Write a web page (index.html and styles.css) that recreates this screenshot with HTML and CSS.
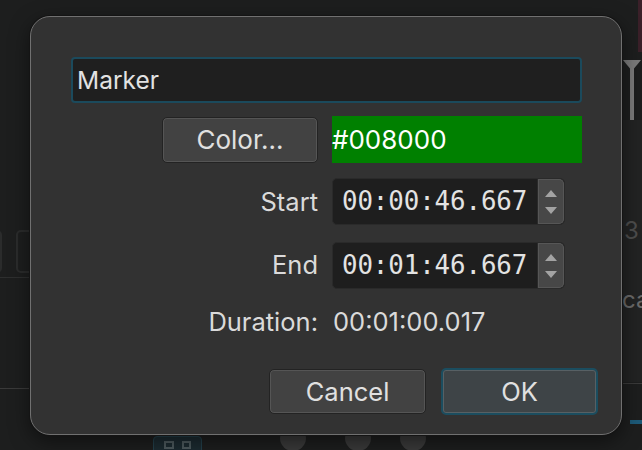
FILE: index.html
```html
<!DOCTYPE html>
<html>
<head>
<meta charset="utf-8">
<link rel="stylesheet" href="styles.css">
</head>
<body>
<div class="backdrop">
  <div class="thumb"></div>
  <div class="playhead"><span class="tri"></span><span class="stem"></span></div>
  <div class="right-panel"><span class="dim-3">3</span><span class="dim-ca">ca</span></div>
  <div class="left-ctl a"></div>
  <div class="left-ctl b"></div>
  <div class="hline l1"></div>
  <div class="hline l2"></div>
  <div class="hline r1"></div>
  <div class="blue-bar"></div>
  <div class="mini-btn"><span></span><span></span></div>
  <div class="knob k1"></div>
  <div class="knob k2"></div>
  <div class="knob k3"></div>
</div>

<div class="dialog">
  <div class="name-field">Marker</div>
  <div class="form">
    <button class="btn color-btn">Color...</button>
    <div class="swatch">#008000</div>

    <div class="label">Start</div>
    <div class="spin">
      <div class="spin-text">00:00:46.667</div>
      <div class="spin-arrows">
        <svg width="16" height="32" viewBox="0 0 16 32"><path d="M2 11 L8 4 L14 11 Z" fill="#a3a3a3"/><path d="M2 21 L14 21 L8 28 Z" fill="#a3a3a3"/></svg>
      </div>
    </div>

    <div class="label">End</div>
    <div class="spin end">
      <div class="spin-text">00:01:46.667</div>
      <div class="spin-arrows">
        <svg width="16" height="32" viewBox="0 0 16 32"><path d="M2 11 L8 4 L14 11 Z" fill="#a3a3a3"/><path d="M2 21 L14 21 L8 28 Z" fill="#a3a3a3"/></svg>
      </div>
    </div>

    <div class="label dur">Duration:</div>
    <div class="dur-value">00:01:00.017</div>
  </div>
  <div class="actions">
    <button class="btn action">Cancel</button>
    <button class="btn action default">OK</button>
  </div>
</div>
</body>
</html>
```

FILE: styles.css
```css
* { box-sizing: border-box; }
html, body { margin: 0; padding: 0; }
body {
  width: 642px;
  height: 450px;
  overflow: hidden;
  background: #1d1e1e;
  font-family: "Inter", "Liberation Sans", sans-serif;
  color: #dedede;
  position: relative;
}

/* backdrop application bits */
.backdrop { position: absolute; inset: 0; }
.thumb { position: absolute; left: 638px; top: 0; width: 4px; height: 52px; background: #3b2029; }
.playhead { position: absolute; left: 623px; top: 60px; width: 22px; height: 60px; }
.playhead .tri { position: absolute; left: 0; top: 0; width: 0; height: 0;
  border-left: 9px solid transparent; border-right: 9px solid transparent; border-top: 11px solid #7b7b7b; }
.playhead .stem { position: absolute; left: 7px; top: 0; width: 4px; height: 60px; background: #7b7b7b; }
.right-panel { position: absolute; left: 622px; top: 120px; width: 20px; height: 262px; background: #222323; overflow: hidden; }
.dim-3 { position: absolute; left: 2px; top: 96px; font-size: 24px; color: #4d4d4d; }
.dim-ca { position: absolute; left: 0; top: 165px; font-size: 24px; color: #6a6a6a; white-space: nowrap; }
.left-ctl { position: absolute; top: 230px; height: 43px; border: 2px solid #2b2c2c; border-radius: 5px; }
.left-ctl.a { left: -20px; width: 22px; }
.left-ctl.b { left: 16px; width: 30px; }
.hline { position: absolute; height: 1px; background: #2e2f2f; }
.hline.l1 { left: 0; top: 277px; width: 30px; }
.hline.l2 { left: 0; top: 388px; width: 30px; background: #3a3a3a; }
.hline.r1 { left: 622px; top: 383px; width: 20px; background: #3a3a3a; }
.blue-bar { position: absolute; left: 630px; top: 420px; width: 12px; height: 4px; background: #1d5a78; }
.mini-btn { position: absolute; left: 153px; top: 436px; width: 49px; height: 20px; background: #1c2b31;
  border: 1px solid #23404b; border-radius: 4px; display: flex; gap: 8px; padding: 4px 10px; }
.mini-btn span { width: 10px; height: 8px; border: 2px solid #4d5a5e; }
.knob { position: absolute; top: 425px; width: 26px; height: 26px; border-radius: 50%; background: #3a3a3a; }
.knob.k1 { left: 280px; }
.knob.k2 { left: 345px; }
.knob.k3 { left: 400px; }

/* dialog */
.dialog {
  position: absolute;
  left: 30px;
  top: 16px;
  width: 592px;
  height: 419px;
  background: #323232;
  border: 1px solid #707070;
  border-radius: 20px;
  box-shadow: 0 0 0 1px #141414, 0 6px 20px rgba(0,0,0,0.5);
  padding: 40px 39px 0 40px;
  display: flex;
  flex-direction: column;
}

.name-field {
  height: 46px;
  background: #1f1f1f;
  border: 2px solid #1b4a5c;
  border-radius: 4px;
  font-size: 24.5px;
  line-height: 42px;
  padding-left: 4px;
  color: #e2e2e2;
}

.form {
  margin-top: 13px;
  display: grid;
  grid-template-columns: 247px 250px;
  column-gap: 14px;
  row-gap: 15px;
  align-items: center;
}

.btn {
  font-family: "Inter", "Liberation Sans", sans-serif;
  color: #e0e0e0;
  background: #424242;
  border: 1px solid #232323;
  border-radius: 5px;
  box-shadow: inset 0 0 0 1px #555;
  font-size: 25.5px;
  cursor: default;
  padding: 0;
}

.color-btn {
  justify-self: end;
  width: 156px;
  height: 46px;
  font-size: 26px;
}

.swatch {
  height: 47px;
  background: #008000;
  color: #ffffff;
  font-size: 26px;
  line-height: 47px;
  padding-left: 0;
}

.label {
  text-align: right;
  font-size: 25.5px;
  color: #dadada;
}

.spin {
  width: 233px;
  height: 47px;
  display: flex;
  border-radius: 5px;
  border: 1px solid #2a2a2a;
  background: #1e1e1e;
  overflow: hidden;
}
.spin.end { margin-top: 2px; }

.spin-text {
  flex: 1;
  font-family: "DejaVu Sans Mono", "Liberation Mono", monospace;
  font-size: 25.8px;
  line-height: 45px;
  padding-left: 9px;
  color: #e3e3e3;
  letter-spacing: -0.1px;
}

.spin-arrows {
  width: 27px;
  background: #474747;
  border-left: 1px solid #2a2a2a;
  box-shadow: inset 0 0 0 1px #565656;
  border-radius: 0 5px 5px 0;
  display: flex;
  align-items: center;
  justify-content: center;
}

.dur { margin-top: 2px; }
.dur-value {
  font-size: 25.5px;
  color: #dadada;
  margin-top: 2px;
  padding-left: 1px;
}

.actions {
  margin-top: 32px;
  margin-right: -16px;
  display: flex;
  justify-content: flex-end;
  gap: 15px;
}

.action {
  width: 157px;
  height: 45px;
}

.action.default {
  height: 47px;
  margin-top: -1px;
  background: #3e4447;
  border: 2px solid #1b4d5f;
  box-shadow: inset 0 0 0 1px #576064;
}
```
